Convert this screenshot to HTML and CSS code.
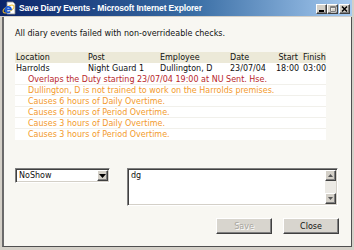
FILE: index.html
```html
<!DOCTYPE html>
<html lang="en">
<head>
<meta charset="utf-8">
<title>Save Diary Events</title>
<link rel="stylesheet" href="styles.css">
</head>
<body>
<div class="window">
  <div class="titlebar">
    <svg class="app-icon" viewBox="0 0 14 14" width="14" height="14" aria-hidden="true">
      <path d="M5 1h6l2 2v10H5z" fill="#fff" stroke="#8a8a8a" stroke-width="0.8"/>
      <ellipse cx="6.5" cy="8" rx="6" ry="2.6" fill="none" stroke="#f2c230" stroke-width="1" transform="rotate(-30 6.5 8)"/>
      <path d="M3.4 8.4h5.6a2.8 2.8 0 1 0 -0.9 2.3" fill="none" stroke="#1c5bd8" stroke-width="1.8"/>
    </svg>
    <span class="title">Save Diary Events - Microsoft Internet Explorer</span>
    <div class="caption-buttons">
      <span class="cbtn"><svg viewBox="0 0 9 8" width="9" height="8"><rect x="2" y="5" width="5" height="2" fill="#000"/></svg></span>
      <span class="cbtn disabled"><svg viewBox="0 0 9 8" width="9" height="8"><path d="M2.5 1.5h5v5h-5z M2.5 2.5h5" fill="none" stroke="#fff" stroke-width="1" transform="translate(0.5 0.5)"/><path d="M2.5 1.5h5v5h-5z M2.5 2.5h5" fill="none" stroke="#808080" stroke-width="1"/></svg></span>
      <span class="cbtn close"><svg viewBox="0 0 9 8" width="9" height="8"><path d="M2 1.5l5 5M7 1.5l-5 5" stroke="#000" stroke-width="1.5"/></svg></span>
    </div>
  </div>
  <div class="client">
    <p class="intro">All diary events failed with non-overrideable checks.</p>
    <table class="events">
      <colgroup>
        <col class="c-loc"><col class="c-post"><col class="c-emp"><col class="c-date"><col class="c-start"><col class="c-finish">
      </colgroup>
      <thead>
        <tr><th>Location</th><th>Post</th><th>Employee</th><th>Date</th><th class="start">Start</th><th class="finish">Finish</th></tr>
      </thead>
      <tbody>
        <tr class="event"><td>Harrolds</td><td>Night Guard 1</td><td>Dullington, D</td><td>23/07/04</td><td class="start">18:00</td><td class="finish">03:00</td></tr>
        <tr class="msg error"><td colspan="6">Overlaps the Duty starting 23/07/04 19:00 at NU Sent. Hse.</td></tr>
        <tr class="msg warn"><td colspan="6">Dullington, D is not trained to work on the Harrolds premises.</td></tr>
        <tr class="msg warn"><td colspan="6">Causes 6 hours of Daily Overtime.</td></tr>
        <tr class="msg warn"><td colspan="6">Causes 6 hours of Period Overtime.</td></tr>
        <tr class="msg warn"><td colspan="6">Causes 3 hours of Daily Overtime.</td></tr>
        <tr class="msg warn"><td colspan="6">Causes 3 hours of Period Overtime.</td></tr>
      </tbody>
    </table>
    <div class="controls">
      <div class="select">
        <span class="select-value">NoShow</span>
        <span class="select-arrow"><svg viewBox="0 0 7 4" width="7" height="4"><path d="M0 0h7L3.5 4z" fill="#000"/></svg></span>
      </div>
      <div class="textarea">
        <div class="textarea-text">dg</div>
        <div class="scrollbar">
          <span class="sb-btn"><svg viewBox="0 0 5 3" width="5" height="3"><path d="M0 3h5L2.5 0z" fill="#555"/></svg></span>
          <span class="sb-track"></span>
          <span class="sb-btn"><svg viewBox="0 0 5 3" width="5" height="3"><path d="M0 0h5L2.5 3z" fill="#555"/></svg></span>
        </div>
      </div>
    </div>
    <div class="actions">
      <button class="btn" disabled>Save</button>
      <button class="btn">Close</button>
    </div>
  </div>
</div>
</body>
</html>
```
FILE: styles.css
```css
html, body {
  margin: 0;
  padding: 0;
  background: #D4D0C8;
}
body {
  font-family: "DejaVu Sans", Verdana, sans-serif;
  font-size: 8px;
  line-height: 11px;
  color: #111;
}
.window {
  width: 354px;
  height: 250px;
  box-sizing: border-box;
  background: #D4D0C8;
  display: flex;
  flex-direction: column;
  overflow: hidden;
}
.titlebar {
  height: 16px;
  margin-right: 2px;
  padding-left: 2px;
  display: flex;
  align-items: center;
  background: linear-gradient(to right, #0A246A 0%, #3A6EA5 55%, #A6CAF0 100%);
}
.app-icon {
  flex: none;
  display: block;
}
.title {
  flex: 1;
  margin-left: 3px;
  font-family: "Liberation Sans", Arial, sans-serif;
  font-weight: bold;
  font-size: 8.5px;
  letter-spacing: -0.15px;
  color: #fff;
  white-space: nowrap;
  overflow: hidden;
}
.caption-buttons {
  display: flex;
  margin-right: 2px;
  margin-top: 1px;
}
.cbtn {
  width: 11px;
  height: 10px;
  box-sizing: border-box;
  background: #D4D0C8;
  border: 1px solid;
  border-color: #fff #404040 #404040 #fff;
  box-shadow: inset -1px -1px #808080;
  display: flex;
  align-items: center;
  justify-content: center;
}
.cbtn svg { display: block; }
.cbtn.close { margin-left: 1px; }

.client {
  flex: 1;
  margin: 1px 2px 3px 2px;
  padding: 11px 12px 0 11px;
  background: #F8F7F2;
  border-left: 2px solid #6a6a6a;
  border-right: 1px solid #505050;
  border-bottom: 1px solid #505050;
}
.intro {
  margin: 0;
  height: 11px;
  white-space: nowrap;
}
.events {
  margin-top: 13px;
  width: 311px;
  border-collapse: collapse;
  table-layout: fixed;
  background: #fff;
}
.c-loc { width: 72px; }
.c-post { width: 72px; }
.c-emp { width: 70px; }
.c-date { width: 47px; }
.c-start { width: 25px; }
.c-finish { width: 25px; }
.events th, .events td {
  padding: 0 0 0 1px;
  height: 11px;
  line-height: 11px;
  white-space: nowrap;
  overflow: visible;
  text-align: left;
  font-weight: normal;
}
.events thead th { background: #ECE9D8; }
.events .start { text-align: right; padding: 0 3px 0 0; }
.events .finish { padding-left: 2px; }
.msg td {
  padding-left: 13px;
  background: linear-gradient(#F1F0EB, #F1F0EB) no-repeat left bottom / 100% 1px;
}
.msg:last-child td { background: none; }
.msg.error td { color: #B8262B; }
.msg.warn td { color: #F39A2C; }

.controls {
  margin-top: 28px;
  display: flex;
  align-items: flex-start;
  gap: 17px;
}
.select {
  width: 95px;
  height: 15px;
  box-sizing: border-box;
  background: #fff;
  border: 1px solid;
  border-color: #808080 #fff #fff #808080;
  box-shadow: inset 1px 1px #404040, inset -1px -1px #D4D0C8;
  padding: 1px;
  display: flex;
  align-items: center;
}
.select-value {
  flex: 1;
  padding-left: 2px;
  line-height: 11px;
}
.select-arrow {
  width: 11px;
  height: 11px;
  box-sizing: border-box;
  background: #D4D0C8;
  border: 1px solid;
  border-color: #fff #404040 #404040 #fff;
  box-shadow: inset -1px -1px #808080;
  display: flex;
  align-items: center;
  justify-content: center;
}
.select-arrow svg { display: block; }
.textarea {
  width: 211px;
  height: 38px;
  box-sizing: border-box;
  background: #fff;
  border: 1px solid;
  border-color: #808080 #fff #fff #808080;
  box-shadow: inset 1px 1px #404040, inset -1px -1px #D4D0C8;
  padding: 1px 1px 1px 2px;
  display: flex;
}
.textarea-text {
  flex: 1;
  line-height: 11px;
  padding-left: 1px;
}
.scrollbar {
  width: 11px;
  display: flex;
  flex-direction: column;
}
.sb-btn {
  width: 11px;
  height: 11px;
  box-sizing: border-box;
  background: #D4D0C8;
  border: 1px solid;
  border-color: #fff #404040 #404040 #fff;
  box-shadow: inset -1px -1px #808080;
  display: flex;
  align-items: center;
  justify-content: center;
}
.sb-btn svg { display: block; }
.sb-track {
  flex: 1;
  background: #ECEAE5;
}
.actions {
  margin-top: 12px;
  display: flex;
  justify-content: flex-end;
  gap: 11px;
}
.btn {
  width: 56px;
  height: 16px;
  box-sizing: border-box;
  margin: 0;
  padding: 0;
  font-family: "DejaVu Sans", Verdana, sans-serif;
  font-size: 8px;
  line-height: 11px;
  color: #111;
  background: #D8D5CE;
  border: 1px solid;
  border-color: #fff #404040 #404040 #fff;
  box-shadow: inset -1px -1px #808080;
}
.btn:disabled {
  color: #A8A59E;
  text-shadow: 1px 1px #fff;
}
```
